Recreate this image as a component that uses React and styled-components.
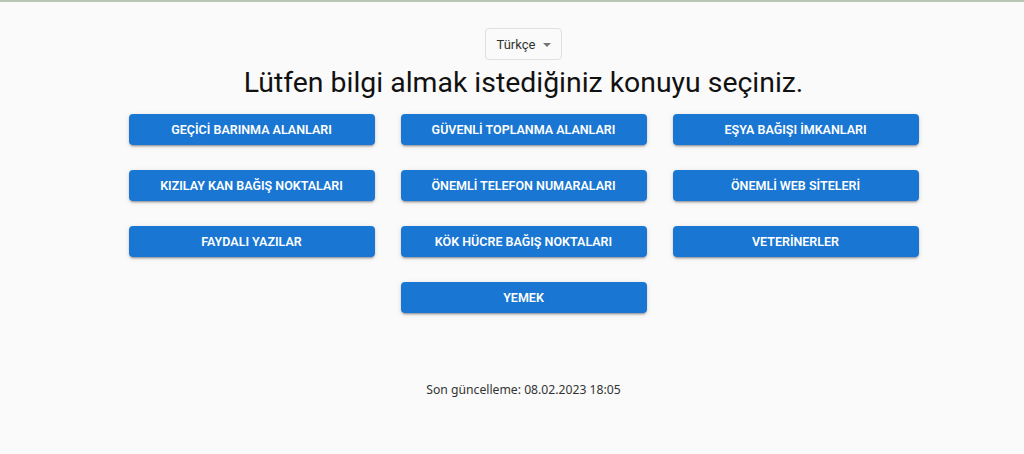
import React from 'react';
import styled, { createGlobalStyle } from 'styled-components';

const GlobalStyle = createGlobalStyle`
    html, body {
        margin: 0;
        padding: 0;
        background-color: #fafafa;
    }
    body {
        font-family: Roboto, "Noto Sans", sans-serif;
    }
`;

const Page = styled.div`
    min-height: 454px;
    box-sizing: border-box;
    border-top: 2px solid #b9c6b6;
    background-color: #fafafa;
    padding-left: 23px;
    display: flex;
    flex-direction: column;
    align-items: center;
`;

const LanguageSelect = styled.div`
    margin-top: 26px;
    height: 32px;
    box-sizing: border-box;
    padding: 0 10px 0 11px;
    display: flex;
    align-items: center;
    gap: 8px;
    border: 1px solid #e0e0e0;
    border-radius: 4px;
    background-color: #fafafa;
    color: #333;
    font-size: 13px;
    cursor: pointer;
`;

const Caret = styled.span`
    width: 0;
    height: 0;
    border-left: 4px solid transparent;
    border-right: 4px solid transparent;
    border-top: 4px solid #757575;
    margin-top: 1px;
`;

const Title = styled.h1`
    margin: 6px 0 0;
    font-size: 28.4px;
    font-weight: 400;
    line-height: 34px;
    color: #111;
`;

const ButtonGrid = styled.div`
    margin-top: 14px;
    display: grid;
    grid-template-columns: repeat(3, 246px);
    column-gap: 26px;
    row-gap: 25px;
`;

const TopicButton = styled.button`
    grid-column: ${props => props.column || 'auto'};
    height: 31px;
    border: none;
    border-radius: 4px;
    background-color: #1976d2;
    color: #fff;
    font-family: Roboto, sans-serif;
    font-size: 12.5px;
    font-weight: 600;
    letter-spacing: 0;
    text-transform: uppercase;
    box-shadow: 0 3px 1px -2px rgba(0,0,0,0.2), 0 2px 2px 0 rgba(0,0,0,0.14), 0 1px 5px 0 rgba(0,0,0,0.12);
    cursor: pointer;
`;

const Footer = styled.p`
    margin: 68px 0 0;
    font-family: "Noto Sans", "Open Sans", sans-serif;
    font-size: 12.2px;
    color: #333;
`;

const topics = [
    'GEÇİCİ BARINMA ALANLARI',
    'GÜVENLİ TOPLANMA ALANLARI',
    'EŞYA BAĞIŞI İMKANLARI',
    'KIZILAY KAN BAĞIŞ NOKTALARI',
    'ÖNEMLİ TELEFON NUMARALARI',
    'ÖNEMLİ WEB SİTELERİ',
    'FAYDALI YAZILAR',
    'KÖK HÜCRE BAĞIŞ NOKTALARI',
    'VETERİNERLER',
];

export default function App() {
    return (
        <>
            <GlobalStyle />
            <Page>
                <LanguageSelect>
                    Türkçe
                    <Caret />
                </LanguageSelect>
                <Title>Lütfen bilgi almak istediğiniz konuyu seçiniz.</Title>
                <ButtonGrid>
                    {topics.map((topic, index) => (
                        <TopicButton key={index}>{topic}</TopicButton>
                    ))}
                    <TopicButton column="2">YEMEK</TopicButton>
                </ButtonGrid>
                <Footer>Son güncelleme: 08.02.2023 18:05</Footer>
            </Page>
        </>
    );
}
